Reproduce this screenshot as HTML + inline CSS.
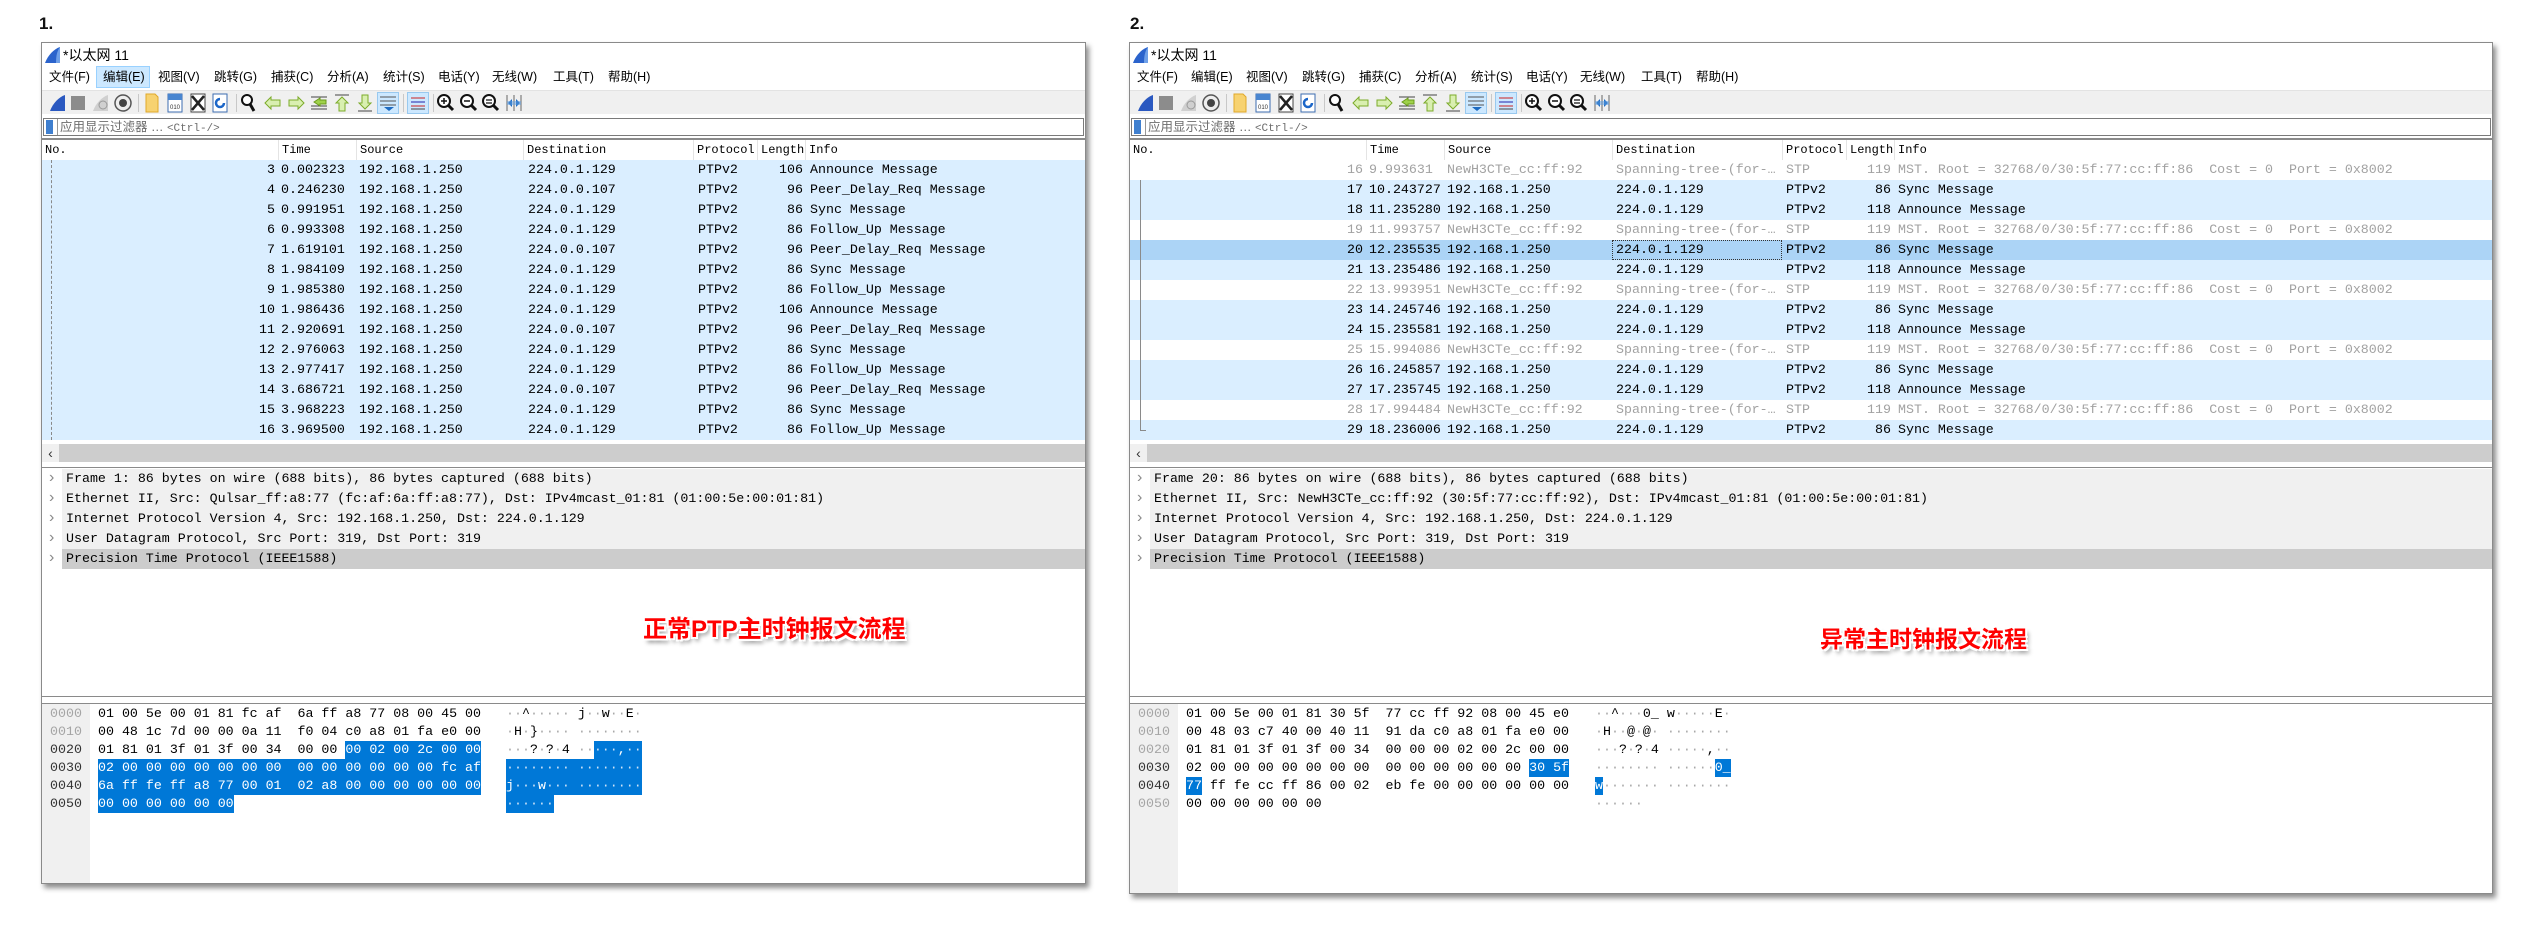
<!DOCTYPE html>
<html><head><meta charset="utf-8">
<style>
*{margin:0;padding:0;box-sizing:border-box}
body{width:2533px;height:935px;background:#fff;position:relative;overflow:hidden;font-family:"Liberation Sans","Noto Sans CJK SC",sans-serif}
.num{position:absolute;top:14px;font:bold 17px "Liberation Sans",sans-serif;color:#111}
.w{position:absolute;top:42px;background:#fff;border:1px solid #8a8a8a;box-shadow:3px 4px 5px rgba(0,0,0,.45);overflow:hidden}
.ttl{position:absolute;left:21px;top:2px;font-size:14px;line-height:20px;color:#000}
.fin{position:absolute;left:2px;top:3px}
.menu{position:absolute;top:23px;height:22px;font-size:12.5px;line-height:22px;color:#000}
.menu span{position:absolute;white-space:nowrap}
.hl{position:absolute;left:54px;top:23px;width:54px;height:22px;background:#cce8ff;border:1px solid #99d1ff}
.tb{position:absolute;left:0;right:0;top:47px;height:24px;background:#f0f0f0;border-top:1px solid #e3e3e3}
.tb svg{position:absolute;top:2px}
.tb .sel{position:absolute;top:1px;width:22px;height:22px;background:#cce8ff;border:1px solid #99c9ef}
.tb .sep{position:absolute;top:3px;width:1px;height:18px;background:#c8c8c8}
.flt{position:absolute;left:1px;right:1px;top:75px;height:18px;border:1px solid #7a7a7a;background:#fff;font-size:12.5px;line-height:16px;color:#6d6d6d}
.flt b{position:absolute;left:2px;top:1px;width:7px;height:14px;background:#3f7fcf}
.flt i{position:absolute;left:13px;top:0;width:1px;height:16px;background:#999}
.flt span{position:absolute;left:16px;top:0;font-style:normal;white-space:nowrap}
.flt em{font-style:normal;font-family:"Liberation Mono",monospace;font-size:11px}
.hdr{position:absolute;left:0;right:0;top:95px;height:22px;border-top:2px solid #8a8a8a;font:12px/20px "Liberation Mono",monospace;color:#000;background:#fff}
.hdr span{position:absolute;top:0;height:20px;border-left:1px solid #e4e4e4;padding-left:3px}
.list{position:absolute;left:0;right:0;top:117px;font:13.3px/20px "Liberation Mono",monospace;color:#000}
.r{position:relative;height:20px;white-space:pre}
.r span{position:absolute;top:0}
.b{background:#daeeff}
.sl{background:#acd4f6}
.g{color:#a2a2a2}
.no{left:0;width:233px;text-align:right}
.t{left:239px}.s{left:317px}.d{left:486px}.p{left:656px}.l{left:715px;width:46px;text-align:right}.i{left:768px}
.tree{position:absolute;left:9px;top:117px;width:0;height:280px;border-left:1px dashed #8a8a8a}
.sb{position:absolute;left:0;right:0;top:401px;height:18px;background:#cdcdcd;font-size:14px;line-height:18px;color:#333}
.sb b{position:absolute;left:0;top:0;width:17px;height:18px;background:#f0f0f0;text-align:center;font-weight:normal}
.det{position:absolute;left:0;right:0;top:424px;height:230px;border-top:1px solid #8a8a8a;border-bottom:1px solid #8a8a8a;font:13.3px/20px "Liberation Mono",monospace;color:#000;background:#fff;padding-top:1px}
.dr{position:relative;height:20px;margin-left:20px;background:#f0f0f0;white-space:pre;padding-left:4px}
.dr:before{content:"\203A";position:absolute;left:-13px;top:-1px;color:#8a8a8a;font-family:"Liberation Sans";font-size:16px}
.dr.x{background:#cccccc}
.bytes{position:absolute;left:0;right:0;top:660px;bottom:0;border-top:1px solid #8a8a8a;font:13.3px/18px "Liberation Mono",monospace;color:#000}
.off{position:absolute;left:0;top:0;bottom:0;width:48px;background:#f0f0f0;padding:1px 0 0 0;color:#a5a5a5;text-align:center;white-space:pre}
.off .k{color:#333}
.hex{position:absolute;left:56px;top:1px;white-space:pre}
.asc{position:absolute;top:1px;white-space:pre}
.q{color:#a8a8a8}
.h{display:inline-block;background:#0078d7;color:#fff;line-height:18px;height:18px}
.h .q{color:#cfe3f7}
.lab{position:absolute;font-family:"Liberation Sans","Noto Sans CJK SC",sans-serif;font-weight:bold;color:#ff0000;white-space:nowrap;
text-shadow:1px 1px 0 #fff,-1px -1px 0 #fff,1px -1px 0 #fff,-1px 1px 0 #fff,2px 2px 0 #fff,-2px -2px 0 #fff,2px -2px 0 #fff,-2px 2px 0 #fff,3px 4px 4px rgba(0,0,0,.45)}
</style></head><body>

<div class="num" style="left:39px">1.</div>
<div class="num" style="left:1130px">2.</div>

<!-- ================= WINDOW 1 ================= -->
<div class="w" style="left:41px;width:1045px;height:842px">
 <svg class="fin" width="18" height="18" viewBox="0 0 18 18"><path d="M1 17 L16 17 L16 1 C10 3 4 9 1 17Z" fill="#2b63cc"/><path d="M16 1 L16 17 L12 17 C12 10 13 5 16 1Z" fill="#6fa0e8"/></svg>
 <div class="ttl">*以太网 11</div>
 <div class="hl"></div>
 <div class="menu" style="left:0;right:0">
  <span style="left:7px">文件(F)</span><span style="left:61px">编辑(E)</span><span style="left:116px">视图(V)</span><span style="left:172px">跳转(G)</span><span style="left:229px">捕获(C)</span><span style="left:285px">分析(A)</span><span style="left:341px">统计(S)</span><span style="left:396px">电话(Y)</span><span style="left:450px">无线(W)</span><span style="left:511px">工具(T)</span><span style="left:566px">帮助(H)</span>
 </div>
 <div class="tb">
  <svg style="left:6px" width="20" height="20"><path d="M2 18 L17 18 L17 2 C11 4 5 10 2 18Z" fill="#2a58c0"/></svg>
  <svg style="left:26px" width="20" height="20"><rect x="3" y="3" width="14" height="14" fill="#8c8c8c"/></svg>
  <svg style="left:49px" width="20" height="20"><path d="M2 18 L17 18 L17 2 C11 4 5 10 2 18Z" fill="#d0d0d0"/><circle cx="12" cy="12" r="4" fill="none" stroke="#999"/></svg>
  <svg style="left:71px" width="20" height="20"><circle cx="10" cy="10" r="8" fill="#eee" stroke="#555" stroke-width="1.5"/><circle cx="10" cy="10" r="4" fill="#444"/></svg>
  <div class="sep" style="left:96px"></div>
  <svg style="left:100px" width="20" height="20"><path d="M4 1 H13 L16 4 V19 H4Z" fill="#f7d270" stroke="#e0a92a"/></svg>
  <svg style="left:123px" width="20" height="20"><rect x="3" y="1" width="14" height="18" fill="#fff" stroke="#3d6db0"/><rect x="3" y="1" width="14" height="6" fill="#4a86d0"/><text x="10" y="16" font-size="6" text-anchor="middle" fill="#333" font-family="Liberation Sans">010</text></svg>
  <svg style="left:146px" width="20" height="20"><rect x="3" y="1" width="14" height="18" fill="#fff" stroke="#444"/><path d="M4 3 L16 17 M16 3 L4 17" stroke="#222" stroke-width="2.5"/></svg>
  <svg style="left:168px" width="20" height="20"><rect x="3" y="1" width="14" height="18" fill="#fff" stroke="#3d6db0"/><path d="M14 10 A4 4 0 1 1 10 6" fill="none" stroke="#1b66c9" stroke-width="2.5"/></svg>
  <div class="sep" style="left:194px"></div>
  <svg style="left:197px" width="20" height="20"><circle cx="8" cy="7" r="5" fill="#fff" stroke="#111" stroke-width="2"/><path d="M11 11 L15 18" stroke="#111" stroke-width="3"/></svg>
  <svg style="left:221px" width="20" height="20"><path d="M2 10 L8 4 V7 H17 V13 H8 V16Z" fill="#d9efb0" stroke="#7cab2a"/></svg>
  <svg style="left:244px" width="20" height="20"><path d="M18 10 L12 4 V7 H3 V13 H12 V16Z" fill="#d9efb0" stroke="#7cab2a"/></svg>
  <svg style="left:267px" width="20" height="20"><path d="M2 4H18M2 16H18M2 13H18" stroke="#444"/><path d="M5 9 L11 5 V7 H17 V11 H11 V13Z" fill="#9fd14a" stroke="#6a9a1c"/></svg>
  <svg style="left:290px" width="20" height="20"><path d="M3 2H17" stroke="#444"/><path d="M10 4 L16 10 H13 V18 H7 V10 H4Z" fill="#d9efb0" stroke="#7cab2a"/></svg>
  <svg style="left:313px" width="20" height="20"><path d="M3 18H17" stroke="#444"/><path d="M10 16 L16 10 H13 V2 H7 V10 H4Z" fill="#d9efb0" stroke="#7cab2a"/></svg>
  <div class="sel" style="left:335px"></div>
  <svg style="left:336px" width="20" height="20"><path d="M2 4H18M2 8H18M2 12H18" stroke="#555"/><path d="M6 14 H16 L11 18Z" fill="#1d6bc2"/></svg>
  <div class="sep" style="left:361px"></div>
  <div class="sel" style="left:365px"></div>
  <svg style="left:366px" width="20" height="20"><path d="M3 5H17" stroke="#c22"/><path d="M3 9H17" stroke="#22a"/><path d="M3 13H17" stroke="#c22"/><path d="M3 16H17" stroke="#444"/></svg>
  <div class="sep" style="left:391px"></div>
  <svg style="left:394px" width="20" height="20"><circle cx="8" cy="8" r="6" fill="#fff" stroke="#111" stroke-width="2"/><path d="M12 12 L17 17" stroke="#111" stroke-width="3"/><path d="M5 8H11M8 5V11" stroke="#111" stroke-width="1.5"/></svg>
  <svg style="left:417px" width="20" height="20"><circle cx="8" cy="8" r="6" fill="#fff" stroke="#111" stroke-width="2"/><path d="M12 12 L17 17" stroke="#111" stroke-width="3"/><path d="M5 8H11" stroke="#111" stroke-width="1.5"/></svg>
  <svg style="left:439px" width="20" height="20"><circle cx="8" cy="8" r="6" fill="#fff" stroke="#111" stroke-width="2"/><path d="M12 12 L17 17" stroke="#111" stroke-width="3"/><path d="M5 7H11M5 10H11" stroke="#111" stroke-width="1.2"/></svg>
  <svg style="left:462px" width="20" height="20"><path d="M3 2V18M17 2V18M10 2V18" stroke="#666"/><path d="M4 10 L8 6 V14Z M16 10 L12 6 V14Z" fill="#1d6bc2"/><rect x="3" y="8" width="14" height="4" fill="#5b9be0" opacity=".5"/></svg>
 </div>
 <div class="flt"><b></b><i></i><span>应用显示过滤器 … <em>&lt;Ctrl-/&gt;</em></span></div>
 <div class="hdr"><span style="left:0;border-left:0">No.</span><span style="left:236px">Time</span><span style="left:314px">Source</span><span style="left:481px">Destination</span><span style="left:651px">Protocol</span><span style="left:715px">Length</span><span style="left:763px">Info</span></div>
 <div class="list">
<div class="r b"><span class="no">3</span><span class="t">0.002323</span><span class="s">192.168.1.250</span><span class="d">224.0.1.129</span><span class="p">PTPv2</span><span class="l">106</span><span class="i">Announce Message</span></div>
<div class="r b"><span class="no">4</span><span class="t">0.246230</span><span class="s">192.168.1.250</span><span class="d">224.0.0.107</span><span class="p">PTPv2</span><span class="l">96</span><span class="i">Peer_Delay_Req Message</span></div>
<div class="r b"><span class="no">5</span><span class="t">0.991951</span><span class="s">192.168.1.250</span><span class="d">224.0.1.129</span><span class="p">PTPv2</span><span class="l">86</span><span class="i">Sync Message</span></div>
<div class="r b"><span class="no">6</span><span class="t">0.993308</span><span class="s">192.168.1.250</span><span class="d">224.0.1.129</span><span class="p">PTPv2</span><span class="l">86</span><span class="i">Follow_Up Message</span></div>
<div class="r b"><span class="no">7</span><span class="t">1.619101</span><span class="s">192.168.1.250</span><span class="d">224.0.0.107</span><span class="p">PTPv2</span><span class="l">96</span><span class="i">Peer_Delay_Req Message</span></div>
<div class="r b"><span class="no">8</span><span class="t">1.984109</span><span class="s">192.168.1.250</span><span class="d">224.0.1.129</span><span class="p">PTPv2</span><span class="l">86</span><span class="i">Sync Message</span></div>
<div class="r b"><span class="no">9</span><span class="t">1.985380</span><span class="s">192.168.1.250</span><span class="d">224.0.1.129</span><span class="p">PTPv2</span><span class="l">86</span><span class="i">Follow_Up Message</span></div>
<div class="r b"><span class="no">10</span><span class="t">1.986436</span><span class="s">192.168.1.250</span><span class="d">224.0.1.129</span><span class="p">PTPv2</span><span class="l">106</span><span class="i">Announce Message</span></div>
<div class="r b"><span class="no">11</span><span class="t">2.920691</span><span class="s">192.168.1.250</span><span class="d">224.0.0.107</span><span class="p">PTPv2</span><span class="l">96</span><span class="i">Peer_Delay_Req Message</span></div>
<div class="r b"><span class="no">12</span><span class="t">2.976063</span><span class="s">192.168.1.250</span><span class="d">224.0.1.129</span><span class="p">PTPv2</span><span class="l">86</span><span class="i">Sync Message</span></div>
<div class="r b"><span class="no">13</span><span class="t">2.977417</span><span class="s">192.168.1.250</span><span class="d">224.0.1.129</span><span class="p">PTPv2</span><span class="l">86</span><span class="i">Follow_Up Message</span></div>
<div class="r b"><span class="no">14</span><span class="t">3.686721</span><span class="s">192.168.1.250</span><span class="d">224.0.0.107</span><span class="p">PTPv2</span><span class="l">96</span><span class="i">Peer_Delay_Req Message</span></div>
<div class="r b"><span class="no">15</span><span class="t">3.968223</span><span class="s">192.168.1.250</span><span class="d">224.0.1.129</span><span class="p">PTPv2</span><span class="l">86</span><span class="i">Sync Message</span></div>
<div class="r b"><span class="no">16</span><span class="t">3.969500</span><span class="s">192.168.1.250</span><span class="d">224.0.1.129</span><span class="p">PTPv2</span><span class="l">86</span><span class="i">Follow_Up Message</span></div>
 </div>
 <div class="tree"></div>
 <div class="sb"><b>‹</b></div>
 <div class="det">
<div class="dr">Frame 1: 86 bytes on wire (688 bits), 86 bytes captured (688 bits)</div>
<div class="dr">Ethernet II, Src: Qulsar_ff:a8:77 (fc:af:6a:ff:a8:77), Dst: IPv4mcast_01:81 (01:00:5e:00:01:81)</div>
<div class="dr">Internet Protocol Version 4, Src: 192.168.1.250, Dst: 224.0.1.129</div>
<div class="dr">User Datagram Protocol, Src Port: 319, Dst Port: 319</div>
<div class="dr x">Precision Time Protocol (IEEE1588)</div>
 </div>
 <div class="bytes">
<div class="off">0000
0010
<span class="k">0020
0030
0040
0050</span></div>
<div class="hex">01 00 5e 00 01 81 fc af  6a ff a8 77 08 00 45 00
00 48 1c 7d 00 00 0a 11  f0 04 c0 a8 01 fa e0 00
01 81 01 3f 01 3f 00 34  00 00 <span class="h">00 02 00 2c 00 00</span>
<span class="h">02 00 00 00 00 00 00 00  00 00 00 00 00 00 fc af</span>
<span class="h">6a ff fe ff a8 77 00 01  02 a8 00 00 00 00 00 00</span>
<span class="h">00 00 00 00 00 00</span></div>
<div class="asc" style="left:464px"><span class="q">··</span>^<span class="q">·····</span> j<span class="q">··</span>w<span class="q">··</span>E<span class="q">·</span>
<span class="q">·</span>H<span class="q">·</span>}<span class="q">····</span> <span class="q">········</span>
<span class="q">···</span>?<span class="q">·</span>?<span class="q">·</span>4 <span class="q">··</span><span class="h"><span class="q">···</span>,<span class="q">··</span></span>
<span class="h"><span class="q">········ ········</span></span>
<span class="h">j<span class="q">···</span>w<span class="q">···</span> <span class="q">········</span></span>
<span class="h"><span class="q">······</span></span></div>
 </div>
</div>

<!-- ================= WINDOW 2 ================= -->
<div class="w" style="left:1129px;width:1364px;height:852px">
 <svg class="fin" width="18" height="18" viewBox="0 0 18 18"><path d="M1 17 L16 17 L16 1 C10 3 4 9 1 17Z" fill="#2b63cc"/><path d="M16 1 L16 17 L12 17 C12 10 13 5 16 1Z" fill="#6fa0e8"/></svg>
 <div class="ttl">*以太网 11</div>
 <div class="menu" style="left:0;right:0">
  <span style="left:7px">文件(F)</span><span style="left:61px">编辑(E)</span><span style="left:116px">视图(V)</span><span style="left:172px">跳转(G)</span><span style="left:229px">捕获(C)</span><span style="left:285px">分析(A)</span><span style="left:341px">统计(S)</span><span style="left:396px">电话(Y)</span><span style="left:450px">无线(W)</span><span style="left:511px">工具(T)</span><span style="left:566px">帮助(H)</span>
 </div>
 <div class="tb">
  <svg style="left:6px" width="20" height="20"><path d="M2 18 L17 18 L17 2 C11 4 5 10 2 18Z" fill="#2a58c0"/></svg>
  <svg style="left:26px" width="20" height="20"><rect x="3" y="3" width="14" height="14" fill="#8c8c8c"/></svg>
  <svg style="left:49px" width="20" height="20"><path d="M2 18 L17 18 L17 2 C11 4 5 10 2 18Z" fill="#d0d0d0"/><circle cx="12" cy="12" r="4" fill="none" stroke="#999"/></svg>
  <svg style="left:71px" width="20" height="20"><circle cx="10" cy="10" r="8" fill="#eee" stroke="#555" stroke-width="1.5"/><circle cx="10" cy="10" r="4" fill="#444"/></svg>
  <div class="sep" style="left:96px"></div>
  <svg style="left:100px" width="20" height="20"><path d="M4 1 H13 L16 4 V19 H4Z" fill="#f7d270" stroke="#e0a92a"/></svg>
  <svg style="left:123px" width="20" height="20"><rect x="3" y="1" width="14" height="18" fill="#fff" stroke="#3d6db0"/><rect x="3" y="1" width="14" height="6" fill="#4a86d0"/><text x="10" y="16" font-size="6" text-anchor="middle" fill="#333" font-family="Liberation Sans">010</text></svg>
  <svg style="left:146px" width="20" height="20"><rect x="3" y="1" width="14" height="18" fill="#fff" stroke="#444"/><path d="M4 3 L16 17 M16 3 L4 17" stroke="#222" stroke-width="2.5"/></svg>
  <svg style="left:168px" width="20" height="20"><rect x="3" y="1" width="14" height="18" fill="#fff" stroke="#3d6db0"/><path d="M14 10 A4 4 0 1 1 10 6" fill="none" stroke="#1b66c9" stroke-width="2.5"/></svg>
  <div class="sep" style="left:194px"></div>
  <svg style="left:197px" width="20" height="20"><circle cx="8" cy="7" r="5" fill="#fff" stroke="#111" stroke-width="2"/><path d="M11 11 L15 18" stroke="#111" stroke-width="3"/></svg>
  <svg style="left:221px" width="20" height="20"><path d="M2 10 L8 4 V7 H17 V13 H8 V16Z" fill="#d9efb0" stroke="#7cab2a"/></svg>
  <svg style="left:244px" width="20" height="20"><path d="M18 10 L12 4 V7 H3 V13 H12 V16Z" fill="#d9efb0" stroke="#7cab2a"/></svg>
  <svg style="left:267px" width="20" height="20"><path d="M2 4H18M2 16H18M2 13H18" stroke="#444"/><path d="M5 9 L11 5 V7 H17 V11 H11 V13Z" fill="#9fd14a" stroke="#6a9a1c"/></svg>
  <svg style="left:290px" width="20" height="20"><path d="M3 2H17" stroke="#444"/><path d="M10 4 L16 10 H13 V18 H7 V10 H4Z" fill="#d9efb0" stroke="#7cab2a"/></svg>
  <svg style="left:313px" width="20" height="20"><path d="M3 18H17" stroke="#444"/><path d="M10 16 L16 10 H13 V2 H7 V10 H4Z" fill="#d9efb0" stroke="#7cab2a"/></svg>
  <div class="sel" style="left:335px"></div>
  <svg style="left:336px" width="20" height="20"><path d="M2 4H18M2 8H18M2 12H18" stroke="#555"/><path d="M6 14 H16 L11 18Z" fill="#1d6bc2"/></svg>
  <div class="sep" style="left:361px"></div>
  <div class="sel" style="left:365px"></div>
  <svg style="left:366px" width="20" height="20"><path d="M3 5H17" stroke="#c22"/><path d="M3 9H17" stroke="#22a"/><path d="M3 13H17" stroke="#c22"/><path d="M3 16H17" stroke="#444"/></svg>
  <div class="sep" style="left:391px"></div>
  <svg style="left:394px" width="20" height="20"><circle cx="8" cy="8" r="6" fill="#fff" stroke="#111" stroke-width="2"/><path d="M12 12 L17 17" stroke="#111" stroke-width="3"/><path d="M5 8H11M8 5V11" stroke="#111" stroke-width="1.5"/></svg>
  <svg style="left:417px" width="20" height="20"><circle cx="8" cy="8" r="6" fill="#fff" stroke="#111" stroke-width="2"/><path d="M12 12 L17 17" stroke="#111" stroke-width="3"/><path d="M5 8H11" stroke="#111" stroke-width="1.5"/></svg>
  <svg style="left:439px" width="20" height="20"><circle cx="8" cy="8" r="6" fill="#fff" stroke="#111" stroke-width="2"/><path d="M12 12 L17 17" stroke="#111" stroke-width="3"/><path d="M5 7H11M5 10H11" stroke="#111" stroke-width="1.2"/></svg>
  <svg style="left:462px" width="20" height="20"><path d="M3 2V18M17 2V18M10 2V18" stroke="#666"/><path d="M4 10 L8 6 V14Z M16 10 L12 6 V14Z" fill="#1d6bc2"/><rect x="3" y="8" width="14" height="4" fill="#5b9be0" opacity=".5"/></svg>
 </div>
 <div class="flt"><b></b><i></i><span>应用显示过滤器 … <em>&lt;Ctrl-/&gt;</em></span></div>
 <div class="hdr"><span style="left:0;border-left:0">No.</span><span style="left:236px">Time</span><span style="left:314px">Source</span><span style="left:482px">Destination</span><span style="left:652px">Protocol</span><span style="left:716px">Length</span><span style="left:764px">Info</span></div>
 <div class="list">
<div class="r g"><span class="no">16</span><span class="t">9.993631</span><span class="s">NewH3CTe_cc:ff:92</span><span class="d">Spanning-tree-(for-…</span><span class="p">STP</span><span class="l">119</span><span class="i">MST. Root = 32768/0/30:5f:77:cc:ff:86  Cost = 0  Port = 0x8002</span></div>
<div class="r b"><span class="no">17</span><span class="t">10.243727</span><span class="s">192.168.1.250</span><span class="d">224.0.1.129</span><span class="p">PTPv2</span><span class="l">86</span><span class="i">Sync Message</span></div>
<div class="r b"><span class="no">18</span><span class="t">11.235280</span><span class="s">192.168.1.250</span><span class="d">224.0.1.129</span><span class="p">PTPv2</span><span class="l">118</span><span class="i">Announce Message</span></div>
<div class="r g"><span class="no">19</span><span class="t">11.993757</span><span class="s">NewH3CTe_cc:ff:92</span><span class="d">Spanning-tree-(for-…</span><span class="p">STP</span><span class="l">119</span><span class="i">MST. Root = 32768/0/30:5f:77:cc:ff:86  Cost = 0  Port = 0x8002</span></div>
<div class="r sl"><span class="no">20</span><span class="t">12.235535</span><span class="s">192.168.1.250</span><span class="d" style="left:482px;width:170px;height:20px;border:1px dotted #333;padding-left:3px;top:0;line-height:18px">224.0.1.129</span><span class="p">PTPv2</span><span class="l">86</span><span class="i">Sync Message</span></div>
<div class="r b"><span class="no">21</span><span class="t">13.235486</span><span class="s">192.168.1.250</span><span class="d">224.0.1.129</span><span class="p">PTPv2</span><span class="l">118</span><span class="i">Announce Message</span></div>
<div class="r g"><span class="no">22</span><span class="t">13.993951</span><span class="s">NewH3CTe_cc:ff:92</span><span class="d">Spanning-tree-(for-…</span><span class="p">STP</span><span class="l">119</span><span class="i">MST. Root = 32768/0/30:5f:77:cc:ff:86  Cost = 0  Port = 0x8002</span></div>
<div class="r b"><span class="no">23</span><span class="t">14.245746</span><span class="s">192.168.1.250</span><span class="d">224.0.1.129</span><span class="p">PTPv2</span><span class="l">86</span><span class="i">Sync Message</span></div>
<div class="r b"><span class="no">24</span><span class="t">15.235581</span><span class="s">192.168.1.250</span><span class="d">224.0.1.129</span><span class="p">PTPv2</span><span class="l">118</span><span class="i">Announce Message</span></div>
<div class="r g"><span class="no">25</span><span class="t">15.994086</span><span class="s">NewH3CTe_cc:ff:92</span><span class="d">Spanning-tree-(for-…</span><span class="p">STP</span><span class="l">119</span><span class="i">MST. Root = 32768/0/30:5f:77:cc:ff:86  Cost = 0  Port = 0x8002</span></div>
<div class="r b"><span class="no">26</span><span class="t">16.245857</span><span class="s">192.168.1.250</span><span class="d">224.0.1.129</span><span class="p">PTPv2</span><span class="l">86</span><span class="i">Sync Message</span></div>
<div class="r b"><span class="no">27</span><span class="t">17.235745</span><span class="s">192.168.1.250</span><span class="d">224.0.1.129</span><span class="p">PTPv2</span><span class="l">118</span><span class="i">Announce Message</span></div>
<div class="r g"><span class="no">28</span><span class="t">17.994484</span><span class="s">NewH3CTe_cc:ff:92</span><span class="d">Spanning-tree-(for-…</span><span class="p">STP</span><span class="l">119</span><span class="i">MST. Root = 32768/0/30:5f:77:cc:ff:86  Cost = 0  Port = 0x8002</span></div>
<div class="r b"><span class="no">29</span><span class="t">18.236006</span><span class="s">192.168.1.250</span><span class="d">224.0.1.129</span><span class="p">PTPv2</span><span class="l">86</span><span class="i">Sync Message</span></div>
 </div>
 <div class="tree" style="left:10px;top:137px;height:250px;border-left:1px solid #8a8a8a"></div>
 <div style="position:absolute;left:10px;top:387px;width:6px;height:1px;background:#8a8a8a"></div>
 <div class="sb"><b>‹</b></div>
 <div class="det">
<div class="dr">Frame 20: 86 bytes on wire (688 bits), 86 bytes captured (688 bits)</div>
<div class="dr">Ethernet II, Src: NewH3CTe_cc:ff:92 (30:5f:77:cc:ff:92), Dst: IPv4mcast_01:81 (01:00:5e:00:01:81)</div>
<div class="dr">Internet Protocol Version 4, Src: 192.168.1.250, Dst: 224.0.1.129</div>
<div class="dr">User Datagram Protocol, Src Port: 319, Dst Port: 319</div>
<div class="dr x">Precision Time Protocol (IEEE1588)</div>
 </div>
 <div class="bytes">
<div class="off">0000
0010
0020
<span class="k">0030
0040</span>
0050</div>
<div class="hex">01 00 5e 00 01 81 30 5f  77 cc ff 92 08 00 45 e0
00 48 03 c7 40 00 40 11  91 da c0 a8 01 fa e0 00
01 81 01 3f 01 3f 00 34  00 00 00 02 00 2c 00 00
02 00 00 00 00 00 00 00  00 00 00 00 00 00 <span class="h">30 5f</span>
<span class="h">77</span> ff fe cc ff 86 00 02  eb fe 00 00 00 00 00 00
00 00 00 00 00 00</div>
<div class="asc" style="left:465px"><span class="q">··</span>^<span class="q">···</span>0_ w<span class="q">·····</span>E<span class="q">·</span>
<span class="q">·</span>H<span class="q">··</span>@<span class="q">·</span>@<span class="q">·</span> <span class="q">········</span>
<span class="q">···</span>?<span class="q">·</span>?<span class="q">·</span>4 <span class="q">·····</span>,<span class="q">··</span>
<span class="q">········ ······</span><span class="h">0_</span>
<span class="h">w</span><span class="q">······· ········</span>
<span class="q">······</span></div>
 </div>
</div>

<div class="lab" style="left:643px;top:609px;font-size:24px">正常PTP主时钟报文流程</div>
<div class="lab" style="left:1820px;top:620px;font-size:23px">异常主时钟报文流程</div>

</body></html>
